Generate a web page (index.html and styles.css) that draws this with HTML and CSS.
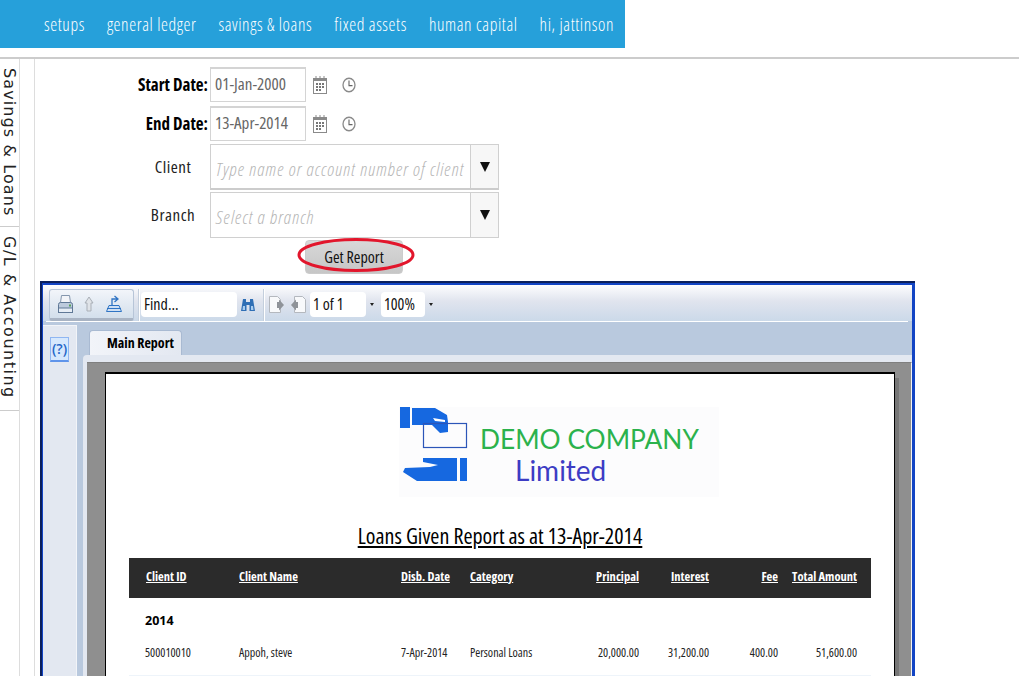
FILE: index.html
```html
<!DOCTYPE html>
<html lang="en">
<head>
  <meta charset="UTF-8">
  <title>Loans Given Report</title>
  <link rel="stylesheet" href="styles.css">
</head>
<body>

  <div class="topnav">
    <a>setups</a>
    <a>general ledger</a>
    <a>savings &amp; loans</a>
    <a>fixed assets</a>
    <a>human capital</a>
    <a>hi, jattinson</a>
  </div>

  <div class="layout">
    <div class="sidetabs">
      <div class="sidetab tab-loans"><span>Savings &amp; Loans</span></div>
      <div class="sidetab tab-gl"><span>G/L &amp; Accounting</span></div>
    </div>
    <div class="spacer-col"></div>

    <div class="content">
      <div class="filter">
        <div class="filter-row date-row">
          <label class="strong">Start Date:</label>
          <div class="date-box">01-Jan-2000</div>
          <svg class="ico-cal" viewBox="0 0 14 18" preserveAspectRatio="none"><use href="#cal"/></svg>
          <svg class="ico-clock" viewBox="0 0 14 14" preserveAspectRatio="none"><use href="#clock"/></svg>
        </div>
        <div class="filter-row date-row">
          <label class="strong">End Date:</label>
          <div class="date-box">13-Apr-2014</div>
          <svg class="ico-cal" viewBox="0 0 14 18" preserveAspectRatio="none"><use href="#cal"/></svg>
          <svg class="ico-clock" viewBox="0 0 14 14" preserveAspectRatio="none"><use href="#clock"/></svg>
        </div>
        <div class="filter-row combo-row">
          <label class="plain">Client</label>
          <div class="combo combo-double">
            <div class="combo-text">Type name or account number of client</div>
            <div class="combo-arrow"></div>
          </div>
        </div>
        <div class="filter-row combo-row">
          <label class="plain">Branch</label>
          <div class="combo">
            <div class="combo-text">Select a branch</div>
            <div class="combo-arrow"></div>
          </div>
        </div>
        <div class="btn-wrap">
          <button class="get-report">Get Report</button>
          <svg class="red-ring" viewBox="0 0 118 36"><ellipse cx="59" cy="17" rx="57" ry="15.5" fill="none" stroke="#e2162c" stroke-width="3"/></svg>
        </div>
      </div>

      <div class="viewer">
        <div class="viewer-inner">
          <div class="toolbar">
            <div class="tool-group">
              <svg class="ico-print" width="15" height="18" viewBox="0 0 15 18">
                <path d="M3.500 .5h8l1 7h-10z" fill="#f2f4f8" stroke="#8496ad"/>
                <rect x=".5" y="7.500" width="14" height="10" rx="2" fill="#bccadc" stroke="#5f7896"/>
                <rect x=".5" y="13" width="14" height="4.500" fill="#e6edf5" stroke="#5f7896"/>
                <rect x="11" y="9.500" width="2" height="2" fill="#57a05a"/>
              </svg>
              <svg class="ico-up" width="10" height="16" viewBox="0 0 10 16">
                <path d="M5 1l4 6H7v8H3V7H1z" fill="#dfe3e8" stroke="#a9afb7"/>
              </svg>
              <svg class="ico-export" width="16" height="17" viewBox="0 0 16 17">
                <path d="M6 10V4h5M8.500 1l3.500 3-3.500 3" fill="none" stroke="#2f74c4" stroke-width="1.300"/>
                <path d="M3 10.500h10l2.500 6H.5z" fill="#cfe0f4" stroke="#2f74c4"/>
                <path d="M1 13.500h14" stroke="#2f74c4"/>
              </svg>
            </div>
            <div class="tool-sep"></div>
            <div class="tool-input find-box">Find...</div>
            <svg class="binoc" width="14" height="14" viewBox="0 0 14 14">
              <path d="M2 1h3v3h4V1h3l2 12H8.500V7h-3v6H0z" fill="#2f6fb5"/>
              <path d="M2 8h2v4H1.500zM10 8h2l.5 4H10z" fill="#a8cdf0"/>
            </svg>
            <div class="tool-sep sep-2"></div>
            <svg class="page-ico" width="16" height="18" viewBox="0 0 16 18">
              <path d="M.5 .5h8l3 3v13H.5z" fill="#f8f9fb" stroke="#b4b8be"/>
              <path d="M8 6h2V3.500l5 5.500-5 5.500V12H8z" fill="#8f9399"/>
            </svg>
            <svg class="page-ico ico-prev" width="16" height="18" viewBox="0 0 16 18">
              <path d="M3.500 .5h8l3 3v13h-11z" fill="#f8f9fb" stroke="#b4b8be"/>
              <path d="M7 6H5V3.500L0 9l5 5.500V12h2z" fill="#8f9399"/>
            </svg>
            <div class="tool-input page-box">1 of 1</div>
            <div class="mini-arrow"></div>
            <div class="tool-input zoom-box">100%</div>
            <div class="mini-arrow"></div>
          </div>
          <div class="toolbar-line"></div>

          <div class="viewer-body">
            <div class="viewer-side">
              <div class="help-btn">(?)</div>
            </div>
            <div class="viewer-main">
              <div class="report-tab">Main Report</div>
              <div class="report-panel">
                <div class="report-grey">
                  <div class="page">
                    <div class="logo">
                      <svg class="logo-mark" width="68" height="76" viewBox="0 0 68 76">
                        <rect x="0" y="0" width="10" height="21" fill="#1668e0"/>
                        <path d="M12 1h23l12 7 1 7v10l-8 1-8-8H12z" fill="#1668e0"/>
                        <path d="M33 11l12 2v2l-10-1z" fill="#fff"/>
                        <rect x="23.500" y="16.500" width="43" height="24" fill="none" stroke="#2b55b8" stroke-width="1.200"/>
                        <path d="M23 51h34v23H17L3 65l2-4 25-1 8-2-15-3z" fill="#1668e0"/>
                        <rect x="60" y="51" width="7" height="23" fill="#1668e0"/>
                      </svg>
                      <div class="logo-text">
                        <div class="logo-name">DEMO COMPANY</div>
                        <div class="logo-sub">Limited</div>
                      </div>
                    </div>

                    <div class="report-title">Loans Given Report as at 13-Apr-2014</div>

                    <div class="rep-row rep-head">
                      <div><u>Client ID</u></div>
                      <div><u>Client Name</u></div>
                      <div><u>Disb. Date</u></div>
                      <div><u>Category</u></div>
                      <div class="num"><u>Principal</u></div>
                      <div class="num"><u>Interest</u></div>
                      <div class="num"><u>Fee</u></div>
                      <div class="num"><u>Total Amount</u></div>
                    </div>
                    <div class="rep-year">2014</div>
                    <div class="rep-row rep-data">
                      <div>500010010</div>
                      <div>Appoh, steve</div>
                      <div>7-Apr-2014</div>
                      <div>Personal Loans</div>
                      <div class="num">20,000.00</div>
                      <div class="num">31,200.00</div>
                      <div class="num">400.00</div>
                      <div class="num">51,600.00</div>
                    </div>
                  </div>
                </div>
              </div>
            </div>
          </div>
        </div>
      </div>
    </div>
  </div>

  <svg width="0" height="0" class="defs">
    <symbol id="cal" viewBox="0 0 14 18" preserveAspectRatio="none">
      <rect x=".5" y="2.500" width="13" height="15" fill="#fff" stroke="#8a8a8a"/>
      <rect x="1" y="2" width="12" height="3" fill="#8a8a8a"/>
      <path d="M3 0v3M7 0v3M11 0v3" stroke="#8a8a8a"/>
      <path d="M3 7h2v2H3zM6 7h2v2H6zM9 7h2v2H9zM3 10h2v2H3zM6 10h2v2H6zM9 10h2v2H9zM3 13h2v2H3zM6 13h2v2H6z" fill="#777"/>
    </symbol>
    <symbol id="clock" viewBox="0 0 14 14" preserveAspectRatio="none">
      <circle cx="7" cy="7" r="6" fill="#fff" stroke="#8a8a8a" stroke-width="1.300"/>
      <path d="M7 3V7.500H10.500" fill="none" stroke="#666" stroke-width="1.100"/>
    </symbol>
  </svg>

</body>
</html>
```

FILE: styles.css
```css
body {
  margin: 0;
  height: 676px;
  overflow: hidden;
  background: #fff;
  font-family: 'Open Sans', sans-serif;
  color: #000;
}

.defs {
  position: absolute;
}

.topnav {
  display: flex;
  gap: 22px;
  box-sizing: border-box;
  width: 625px;
  height: 48px;
  padding: 14px 0 0 44px;
  background: #26a0da;
  color: #fff;
  font-size: 17.500px;
  font-stretch: 75%;
  font-weight: 300;
  letter-spacing: .6px;
  line-height: 20px;
  white-space: nowrap;
}

.layout {
  display: flex;
  margin-top: 9px;
  border-top: 2px solid #ccc;
}

/* vertical tabs on the left */
.sidetabs {
  width: 19px;
  flex: none;
  border-right: 1px solid #ddd;
  height: 640px;
}

.sidetab {
  box-sizing: border-box;
  border-bottom: 1px solid #ccc;
  writing-mode: vertical-rl;
  font-family: 'DejaVu Sans', sans-serif;
  font-size: 16px;
  line-height: 19px;
  color: #222;
  white-space: nowrap;
  padding-top: 9px;
}

.tab-loans { height: 168px; letter-spacing: 1.100px; }
.tab-gl { height: 184px; letter-spacing: 1.500px; }

.spacer-col {
  width: 14px;
  flex: none;
  border-right: 1px solid #ddd;
}

.content {
  flex: 1;
  padding-left: 5px;
  min-width: 0;
}

/* filter form */
.filter {
  padding-top: 8px;
  width: 480px;
}

.filter-row {
  display: flex;
  align-items: center;
}

.filter-row label {
  box-sizing: border-box;
  width: 170px;
  flex: none;
  padding-right: 2px;
  text-align: right;
  font-size: 17px;
  font-stretch: 75%;
}

.strong {
  font-weight: 700;
}

.date-row {
  height: 35px;
  margin-bottom: 4px;
}

.date-row + .combo-row {
  margin-top: -1px;
}

.date-box {
  box-sizing: border-box;
  width: 96px;
  height: 35px;
  border: 1px solid #d4d4d4;
  border-top-width: 2px;
  padding: 5px 0 0 4px;
  font-size: 17px;
  font-stretch: 75%;
  line-height: 20px;
  color: #666;
}

.ico-cal {
  width: 14px;
  height: 18px;
  margin-left: 7px;
}

.ico-clock {
  width: 14px;
  height: 16px;
  margin-left: 15px;
}

.combo-row {
  margin-bottom: 2px;
}

.combo-row .plain {
  padding: 0 0 1px 96px;
  text-align: center;
  font-stretch: 75%;
  letter-spacing: .5px;
  color: #222;
}

.combo {
  box-sizing: border-box;
  display: flex;
  width: 289px;
  height: 46px;
  border: 1px solid #d0d0d0;
}

.combo-double {
  border-bottom: 2px solid #ccc;
}

.combo-text {
  flex: 1;
  padding: 13px 0 0 5px;
  font-size: 18.500px;
  font-stretch: 75%;
  font-weight: 300;
  font-style: italic;
  letter-spacing: 1px;
  line-height: 22px;
  color: #b5b5b5;
  white-space: nowrap;
  overflow: hidden;
}

.combo-arrow {
  width: 28px;
  flex: none;
  border-left: 1px solid #d0d0d0;
  background: #f7f7f7;
  display: flex;
  justify-content: center;
  padding-top: 17px;
  box-sizing: border-box;
}

.combo-arrow::after {
  content: "";
  width: 0;
  height: 0;
  border-left: 5px solid transparent;
  border-right: 5px solid transparent;
  border-top: 10px solid #111;
}

.btn-wrap {
  position: relative;
  width: 98px;
  margin: 2px 0 0 265px;
}

.get-report {
  display: block;
  width: 98px;
  height: 34px;
  border: 1px solid #ccc;
  border-radius: 4px;
  background: linear-gradient(#d8d8d8, #c6c6c6);
  font-family: 'Open Sans', sans-serif;
  font-size: 16px;
  font-stretch: 75%;
  color: #111;
  padding: 0 0 1px;
}

.red-ring {
  position: absolute;
  left: -8px;
  top: -2px;
  width: 118px;
  height: 36px;
}

/* report viewer */
.viewer {
  box-sizing: border-box;
  width: 875px;
  margin-top: 7px;
  border-top: 2px solid #0a1f5c;
  border-left: 2px solid #0a1f5c;
}

.viewer-inner {
  border-top: 2px solid #1244c4;
  border-left: 1px solid #1244c4;
  border-right: 3px solid #1244c4;
  background: #b9c9de;
}

.toolbar {
  display: flex;
  align-items: center;
  box-sizing: border-box;
  height: 36px;
  padding: 3px 0 0 6px;
  background: linear-gradient(#fdfdfe, #e0e4ee 45%, #cbd9e9);
  font-size: 16px;
  font-stretch: 75%;
}

.tool-group {
  display: flex;
  align-items: center;
  box-sizing: border-box;
  width: 85px;
  height: 32px;
  padding-left: 8px;
  border: 1px solid #b7c5d8;
  border-bottom: 3px solid #a9b4c4;
  border-radius: 3px;
  background: linear-gradient(#f2f5fa, #d3dfec);
}

.ico-up { margin: 0 12px 0 11px; }

.tool-sep {
  width: 1px;
  height: 32px;
  margin: 0 2px 0 4px;
  background: #c4cfdd;
  box-shadow: 1px 0 #fff;
}

.tool-input {
  box-sizing: border-box;
  height: 25px;
  padding-left: 3px;
  border-radius: 4px;
  background: #fff;
  line-height: 25px;
  color: #111;
}

.find-box { width: 96px; }
.binoc { margin: 0 2px 0 4px; }
.sep-2 { margin-left: 6px; margin-right: 4px; }
.page-ico { margin-left: 1px; }
.ico-prev { margin-left: 6px; margin-right: 3px; }
.page-box { width: 56px; }
.zoom-box { width: 44px; }

.mini-arrow {
  width: 0;
  height: 0;
  margin: 0 7px 0 4px;
  border-left: 2.500px solid transparent;
  border-right: 2.500px solid transparent;
  border-top: 3px solid #222;
}

.toolbar-line {
  height: 1px;
  margin: 0 4px 0 3px;
  background: #fff;
}

.viewer-body {
  display: flex;
  padding-top: 3px;
}

.viewer-side {
  box-sizing: border-box;
  width: 34px;
  flex: none;
  padding: 11px 0 0 7px;
  border-top: 1px solid #f2f4f8;
  border-right: 1px solid #f2f4f8;
  background: #e3e8f1;
}

.help-btn {
  box-sizing: border-box;
  width: 19px;
  height: 25px;
  border: 1px solid #8fb6f2;
  border-bottom: 2px solid #5f94ea;
  background: #d6e8fd;
  font-size: 14px;
  font-weight: 600;
  line-height: 22px;
  text-align: center;
  color: #2466c8;
}

.viewer-main {
  flex: 1;
  padding: 5px 0 0 6px;
  min-width: 0;
}

.report-tab {
  box-sizing: border-box;
  width: 93px;
  height: 25px;
  margin-left: 6px;
  border: 1px solid #a9bad2;
  border-bottom: none;
  border-radius: 4px 4px 0 0;
  background: linear-gradient(90deg, #f2f4f9, #e3e8f1);
  padding-left: 17px;
  font-size: 14px;
  font-stretch: 75%;
  font-weight: 700;
  line-height: 23px;
}

.report-panel {
  padding: 7px 0 0 4px;
  border-top-left-radius: 4px;
  background: #e3e8f1;
}

.report-grey {
  padding: 9px 16px 0 18px;
  border-top: 1px solid #7f7f7f;
  border-right: 1px solid #f2f2f2;
  background: #8f8f8f;
}

.page {
  box-sizing: border-box;
  height: 400px;
  padding: 0 23px;
  border: 1px solid #000;
  border-top-width: 2px;
  background: #fff;
  box-shadow: 4px 6px 0 #777;
}

.logo {
  display: flex;
  width: 320px;
  height: 90px;
  margin: 33px 0 0 270px;
  background: #fcfcfd;
}

.logo-mark {
  flex: none;
  margin-left: 1px;
}

.logo-text {
  margin: 17px 0 0 12px;
  font-family: Lato, sans-serif;
}

.logo-name {
  font-size: 26.300px;
  line-height: 30px;
  color: #2bb24c;
  white-space: nowrap;
}

.logo-sub {
  margin: 1px 0 0 35px;
  font-size: 28px;
  line-height: 30px;
  color: #3d3cc4;
}

.report-title {
  margin-top: 24px;
  text-align: center;
  font-size: 22px;
  font-stretch: 75%;
  line-height: 28px;
  text-decoration: underline;
}

.rep-row {
  display: grid;
  grid-template-columns: 93px 162px 69px 100px 69px 70px 69px 79px;
  box-sizing: border-box;
  padding: 0 14px 0 17px;
  white-space: nowrap;
  font-stretch: 75%;
}

.rep-head {
  height: 40px;
  margin-top: 9px;
  padding-bottom: 4px;
  align-items: center;
  background: #2b2b2b;
  color: #fff;
  font-size: 12.500px;
  font-weight: 700;
}

.rep-year {
  padding: 14px 0 0 16px;
  font-size: 12.500px;
  font-weight: 700;
  line-height: 18px;
}

.rep-data {
  height: 46px;
  padding-top: 14px;
  border-bottom: 1px solid #eef4fa;
  font-size: 12px;
  line-height: 18px;
  color: #222;
}

.rep-data > div:first-child {
  margin-left: -1px;
}

.num {
  text-align: right;
}
```
